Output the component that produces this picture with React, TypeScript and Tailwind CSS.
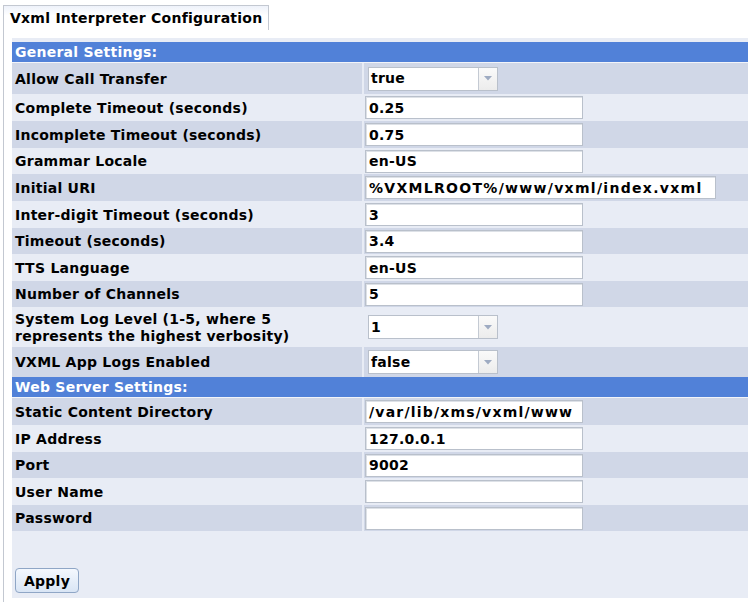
import React from 'react';

type Row =
  | { kind: 'header'; label: string }
  | { kind: 'input'; label: string; value: string; h: number; wide?: boolean; track?: string }
  | { kind: 'select'; label: string; value: string; h: number; lines?: string[] };

const ROWS: Row[] = [
  { kind: 'header', label: 'General Settings:' },
  { kind: 'select', label: 'Allow Call Transfer', value: 'true', h: 31 },
  { kind: 'input', label: 'Complete Timeout (seconds)', value: '0.25', h: 27 },
  { kind: 'input', label: 'Incomplete Timeout (seconds)', value: '0.75', h: 27 },
  { kind: 'input', label: 'Grammar Locale', value: 'en-US', h: 26 },
  {
    kind: 'input',
    label: 'Initial URI',
    value: '%VXMLROOT%/www/vxml/index.vxml',
    h: 27,
    wide: true,
    track: 'tracking-[1.3px]',
  },
  { kind: 'input', label: 'Inter-digit Timeout (seconds)', value: '3', h: 27 },
  { kind: 'input', label: 'Timeout (seconds)', value: '3.4', h: 26 },
  { kind: 'input', label: 'TTS Language', value: 'en-US', h: 27 },
  { kind: 'input', label: 'Number of Channels', value: '5', h: 26 },
  {
    kind: 'select',
    label: 'System Log Level',
    lines: ['System Log Level (1-5, where 5', 'represents the highest verbosity)'],
    value: '1',
    h: 40,
  },
  { kind: 'select', label: 'VXML App Logs Enabled', value: 'false', h: 30 },
  { kind: 'header', label: 'Web Server Settings:' },
  {
    kind: 'input',
    label: 'Static Content Directory',
    value: '/var/lib/xms/vxml/www',
    h: 27,
    track: 'tracking-[1.2px]',
  },
  { kind: 'input', label: 'IP Address', value: '127.0.0.1', h: 27 },
  { kind: 'input', label: 'Port', value: '9002', h: 26 },
  { kind: 'input', label: 'User Name', value: '', h: 27 },
  { kind: 'input', label: 'Password', value: '', h: 26 },
];

function SelectBox({ value }: { value: string }) {
  return (
    <div className="ml-[4px] flex h-[24px] w-[130px] border border-[#b9c0cb] bg-white">
      <div className="flex flex-1 items-center pl-[2px]">{value}</div>
      <div className="flex w-[19px] items-center justify-center border-l border-[#c4cad3] bg-gradient-to-b from-[#fafafa] to-[#ececec]">
        <svg width="8" height="5" viewBox="0 0 8 5">
          <path d="M0 0h8L4 4.5z" fill="#9eabc2" />
        </svg>
      </div>
    </div>
  );
}

function TextBox({ value, wide, track }: { value: string; wide?: boolean; track?: string }) {
  return (
    <div
      className={`ml-[1px] flex h-[23px] items-center overflow-hidden whitespace-nowrap border border-[#b9c0cb] bg-white pl-[3px] pt-[1px] shadow-[inset_1px_1px_0_#dde1e7] ${
        wide ? 'w-[351px]' : 'w-[218px]'
      } ${track ?? ''}`}
    >
      {value}
    </div>
  );
}

export default function App() {
  let dark = true;
  return (
    <div
      className="h-[602px] w-[748px] overflow-hidden bg-white text-[14px] font-bold leading-[17px] tracking-[0.25px] text-black"
      style={{ fontFamily: '"DejaVu Sans", Verdana, sans-serif' }}
    >
      {/* tab */}
      <div className="flex pt-[5px] pl-[3px]">
        <div className="flex h-[25px] w-[266px] items-center border-t border-r border-l border-[#c3c8d1] bg-gradient-to-b from-[#eef2fa] to-white to-40% pt-[1px] pl-[6px]">
          Vxml Interpreter Configuration
        </div>
      </div>
      {/* panel */}
      <div className="ml-[3px] h-[572px] border-l border-[#c3c8d1] pt-[8px] pl-[8px]">
        <div className="flex h-[560px] flex-col bg-[#e8ecf5] pt-[4px]">
          {ROWS.map((r, i) => {
            if (r.kind === 'header') {
              dark = true;
              return (
                <div
                  key={i}
                  className="flex h-[21px] items-center border-b border-[#f2f4f9] bg-[#5181d8] pl-[3px] text-white"
                >
                  {r.label}
                </div>
              );
            }
            const bg = dark ? 'bg-[#d0d7e7]' : 'bg-[#e8ecf5]';
            dark = !dark;
            return (
              <div key={i} className="flex" style={{ height: r.h }}>
                <div className={`flex w-[350px] flex-col justify-center pt-[1px] pl-[3px] ${bg}`}>
                  {r.kind === 'select' && r.lines
                    ? r.lines.map((l) => <div key={l}>{l}</div>)
                    : r.label}
                </div>
                <div className="w-[2px] bg-[#e8ecf5]" />
                <div className={`flex flex-1 items-center ${bg}`}>
                  {r.kind === 'select' ? (
                    <SelectBox value={r.value} />
                  ) : (
                    <TextBox value={r.value} wide={r.wide} track={r.track} />
                  )}
                </div>
              </div>
            );
          })}
          <div className="flex flex-1 items-end pb-[5px] pl-[3px]">
            <button className="h-[25px] w-[64px] rounded-[4px] border border-[#8fa6c6] bg-gradient-to-b from-[#f4f8fe] to-[#d9e5f5] pt-[1px] text-[14px] font-bold">
              Apply
            </button>
          </div>
        </div>
      </div>
    </div>
  );
}
